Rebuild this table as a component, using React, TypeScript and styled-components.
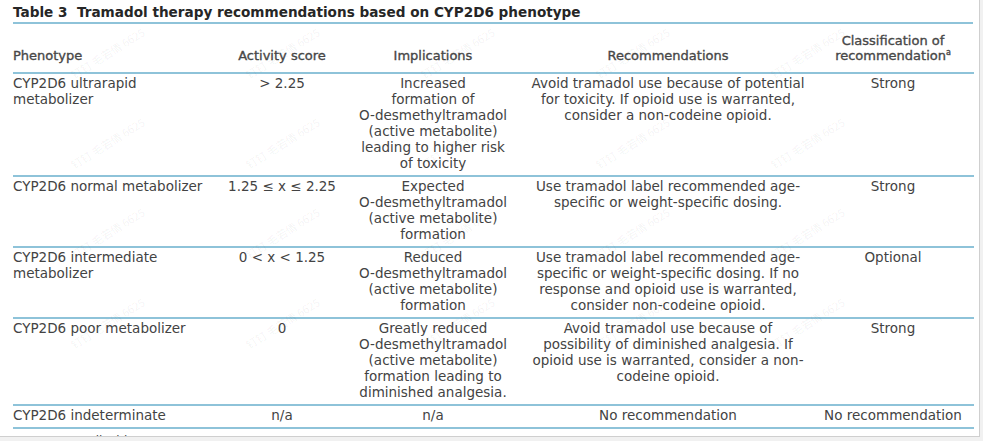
import React from 'react';
import styled, { createGlobalStyle } from 'styled-components';

const GlobalStyle = createGlobalStyle`
  html, body {
    margin: 0;
    padding: 0;
    background: #f1f1f1;
  }
`;

const Sheet = styled.div`
  position: relative;
  width: 980px;
  height: 437px;
  box-sizing: border-box;
  padding: 0 6px 0 13px;
  background: #ffffff;
  border-right: 1px solid #cfcfcf;
  border-bottom: 1px solid #cfcfcf;
  overflow: hidden;
  font-family: "DejaVu Sans", "Noto Sans CJK SC", sans-serif;
  color: #434343;
`;

const Title = styled.div`
  height: 24px;
  box-sizing: border-box;
  padding-top: 3px;
  line-height: 18px;
  font-size: 13.6px;
  font-weight: bold;
  color: #262626;
  border-bottom: 2px solid #8ec3d9;
  white-space: pre;
`;

const Table = styled.table`
  width: 961px;
  border-collapse: collapse;
  table-layout: fixed;
`;

const HeadCell = styled.th<{ $align?: string }>`
  height: 49px;
  box-sizing: border-box;
  padding: 0 0 9px;
  vertical-align: bottom;
  text-align: ${({ $align }) => $align || 'center'};
  font-size: 13px;
  font-weight: normal;
  line-height: 15px;
  color: #474747;
  -webkit-text-stroke: 0.35px #474747;
  border-bottom: 2px solid #8ec3d9;
`;

const Cell = styled.td<{ $align?: string }>`
  padding: 1px 0 4px;
  vertical-align: top;
  text-align: ${({ $align }) => $align || 'center'};
  font-size: 13.5px;
  line-height: 16px;
  border-bottom: 2px solid #8ec3d9;
  white-space: nowrap;
`;

const Line = styled.span`
  display: block;
`;

const Sup = styled.sup`
  font-size: 8px;
  line-height: 0;
  vertical-align: 5px;
`;

const Footnote = styled.div`
  margin-top: 5px;
  font-size: 12px;
  line-height: 15px;
`;

const Watermarks = styled.div`
  position: absolute;
  top: 8px;
  left: 20px;
  display: grid;
  grid-template-columns: repeat(5, 175px);
  grid-auto-rows: 90px;
  pointer-events: none;
`;

const Mark = styled.span`
  display: flex;
  align-items: center;
  justify-content: center;
  transform: rotate(-32deg);
  font-family: "Noto Sans CJK SC", "DejaVu Sans", sans-serif;
  font-size: 11px;
  color: rgba(0, 0, 0, 0.06);
  white-space: nowrap;
`;

type Row = {
  phenotype: string[];
  score: string[];
  impl: string[];
  rec: string[];
  cls: string;
};

const rows: Row[] = [
  {
    phenotype: ['CYP2D6 ultrarapid', 'metabolizer'],
    score: ['> 2.25'],
    impl: ['Increased', 'formation of', 'O-desmethyltramadol', '(active metabolite)', 'leading to higher risk', 'of toxicity'],
    rec: ['Avoid tramadol use because of potential', 'for toxicity. If opioid use is warranted,', 'consider a non-codeine opioid.'],
    cls: 'Strong',
  },
  {
    phenotype: ['CYP2D6 normal metabolizer'],
    score: ['1.25 ≤ x ≤ 2.25'],
    impl: ['Expected', 'O-desmethyltramadol', '(active metabolite)', 'formation'],
    rec: ['Use tramadol label recommended age-', 'specific or weight-specific dosing.'],
    cls: 'Strong',
  },
  {
    phenotype: ['CYP2D6 intermediate', 'metabolizer'],
    score: ['0 < x < 1.25'],
    impl: ['Reduced', 'O-desmethyltramadol', '(active metabolite)', 'formation'],
    rec: ['Use tramadol label recommended age-', 'specific or weight-specific dosing. If no', 'response and opioid use is warranted,', 'consider non-codeine opioid.'],
    cls: 'Optional',
  },
  {
    phenotype: ['CYP2D6 poor metabolizer'],
    score: ['0'],
    impl: ['Greatly reduced', 'O-desmethyltramadol', '(active metabolite)', 'formation leading to', 'diminished analgesia.'],
    rec: ['Avoid tramadol use because of', 'possibility of diminished analgesia. If', 'opioid use is warranted, consider a non-', 'codeine opioid.'],
    cls: 'Strong',
  },
  {
    phenotype: ['CYP2D6 indeterminate'],
    score: ['n/a'],
    impl: ['n/a'],
    rec: ['No recommendation'],
    cls: 'No recommendation',
  },
];

const Lines = ({ items }: { items: string[] }) => (
  <>
    {items.map((t, i) => (
      <Line key={i}>{t}</Line>
    ))}
  </>
);

const App = () => {
  return (
    <>
      <GlobalStyle />
      <Sheet>
        <Title>{'Table 3  Tramadol therapy recommendations based on CYP2D6 phenotype'}</Title>
        <Table>
          <colgroup>
            <col style={{ width: 209 }} />
            <col style={{ width: 120 }} />
            <col style={{ width: 182 }} />
            <col style={{ width: 288 }} />
            <col style={{ width: 162 }} />
          </colgroup>
          <thead>
            <tr>
              <HeadCell $align="left">Phenotype</HeadCell>
              <HeadCell>Activity score</HeadCell>
              <HeadCell>Implications</HeadCell>
              <HeadCell>Recommendations</HeadCell>
              <HeadCell>
                Classification of
                <br />
                recommendation<Sup>a</Sup>
              </HeadCell>
            </tr>
          </thead>
          <tbody>
            {rows.map((r, i) => (
              <tr key={i}>
                <Cell $align="left"><Lines items={r.phenotype} /></Cell>
                <Cell><Lines items={r.score} /></Cell>
                <Cell><Lines items={r.impl} /></Cell>
                <Cell><Lines items={r.rec} /></Cell>
                <Cell>{r.cls}</Cell>
              </tr>
            ))}
          </tbody>
        </Table>
        <Footnote>n/a = not applicable.</Footnote>
        <Watermarks>
          {Array.from({ length: 20 }).map((_, i) => (
            <Mark key={i}>钉钉 毛若倩 6625</Mark>
          ))}
        </Watermarks>
      </Sheet>
    </>
  );
};

export default App;
